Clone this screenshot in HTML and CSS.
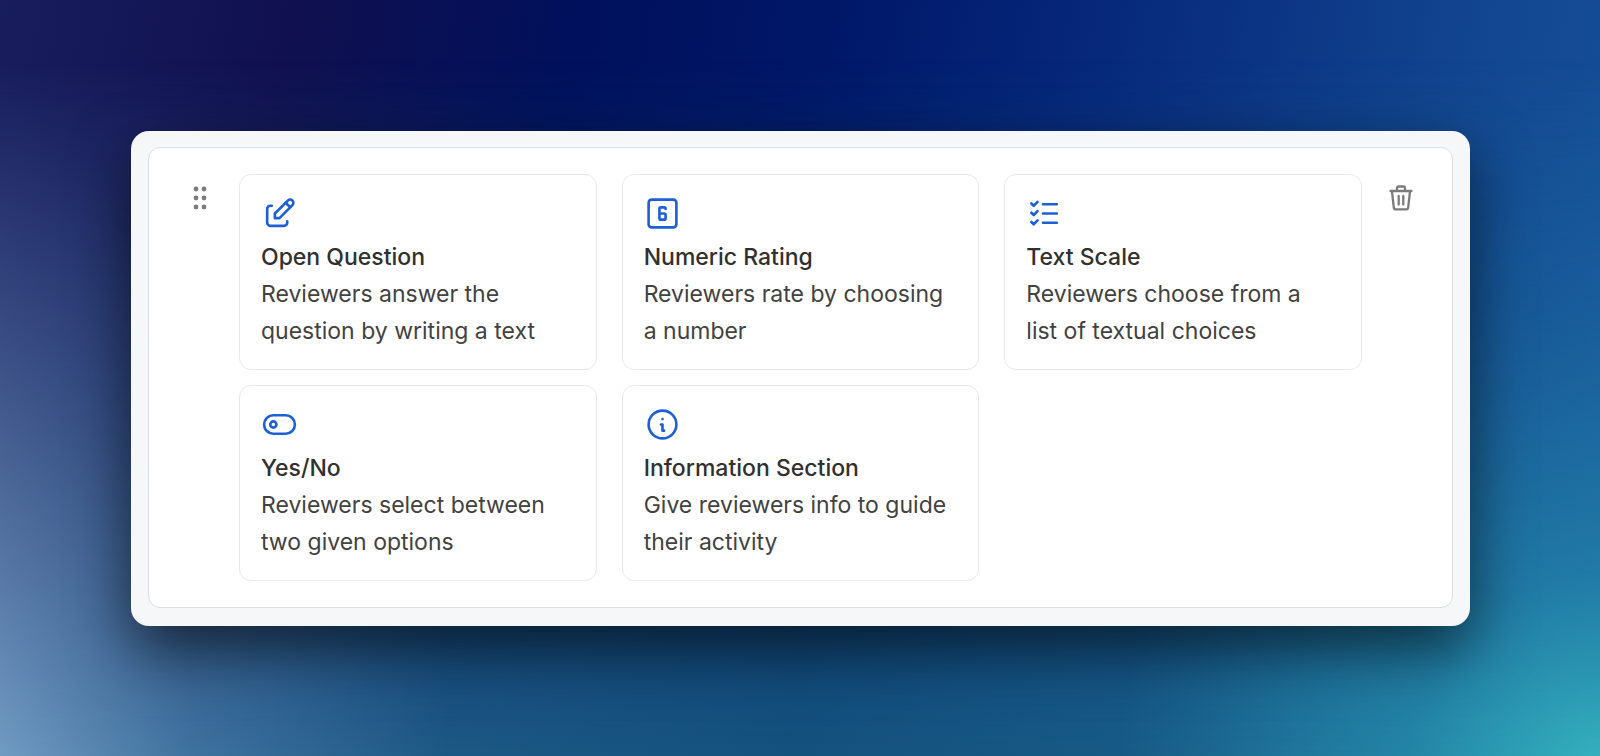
FILE: index.html
```html
<!DOCTYPE html>
<html lang="en">
<head>
    <meta charset="utf-8">
    <title>Question types</title>
    <link rel="stylesheet" href="styles.css">
</head>
<body>
    <main class="frame">
        <div class="panel">
            <button class="icon-button" type="button" aria-label="Move question">
                <svg viewBox="0 0 28 28" fill="currentColor">
                    <circle cx="10" cy="5" r="2.4"/><circle cx="18" cy="5" r="2.4"/>
                    <circle cx="10" cy="14" r="2.4"/><circle cx="18" cy="14" r="2.4"/>
                    <circle cx="10" cy="23" r="2.4"/><circle cx="18" cy="23" r="2.4"/>
                </svg>
            </button>

            <div class="types">
                <button class="type" type="button">
                    <svg class="type-icon" viewBox="0 0 24 24">
                        <path d="M7 7H6a2 2 0 0 0-2 2v9a2 2 0 0 0 2 2h9a2 2 0 0 0 2-2v-1"/>
                        <path d="M20.385 6.585a2.1 2.1 0 0 0-2.97-2.97L9 12v3h3l8.385-8.415z"/>
                        <path d="M16 5l3 3"/>
                    </svg>
                    <span class="type-title">Open Question</span>
                    <span class="type-text">Reviewers answer the question by writing a text</span>
                </button>
                <button class="type" type="button">
                    <svg class="type-icon" viewBox="0 0 24 24">
                        <rect x="3" y="3" width="18" height="18" rx="2"/>
                        <path d="M14 9a1 1 0 0 0-1-1h-2a1 1 0 0 0-1 1v6a1 1 0 0 0 1 1h2a1 1 0 0 0 1-1v-2a1 1 0 0 0-1-1h-3"/>
                    </svg>
                    <span class="type-title">Numeric Rating</span>
                    <span class="type-text">Reviewers rate by choosing a number</span>
                </button>
                <button class="type" type="button">
                    <svg class="type-icon" viewBox="0 0 24 24">
                        <path d="M3.5 5.500L5 7l2.500-2.500"/>
                        <path d="M3.500 11.500L5 13l2.500-2.500"/>
                        <path d="M3.500 17.500L5 19l2.500-2.500"/>
                        <path d="M11 6h9M11 12h9M11 18h9"/>
                    </svg>
                    <span class="type-title">Text Scale</span>
                    <span class="type-text">Reviewers choose from a list of textual choices</span>
                </button>
                <button class="type" type="button">
                    <svg class="type-icon" viewBox="0 0 24 24">
                        <rect x="2" y="6" width="20" height="12" rx="6"/>
                        <circle cx="8" cy="12" r="2"/>
                    </svg>
                    <span class="type-title">Yes/No</span>
                    <span class="type-text">Reviewers select between two given options</span>
                </button>
                <button class="type" type="button">
                    <svg class="type-icon" viewBox="0 0 24 24">
                        <circle cx="12" cy="12" r="9"/>
                        <path d="M12 8.500h.01M11 12h1v4h1"/>
                    </svg>
                    <span class="type-title">Information Section</span>
                    <span class="type-text">Give reviewers info to guide their activity</span>
                </button>
            </div>

            <button class="icon-button" type="button" aria-label="Delete question">
                <svg viewBox="0 0 28 28" fill="none" stroke="currentColor" stroke-width="2.3" stroke-linecap="round" stroke-linejoin="round">
                    <path d="M3.5 7h21"/>
                    <path d="M10 6.500V4a1.500 1.500 0 0 1 1.500-1.500h5A1.500 1.500 0 0 1 18 4v2.500"/>
                    <path d="M5 7.500l1.800 16a2 2 0 0 0 2 1.800h10.400a2 2 0 0 0 2-1.800L23 7.500"/>
                    <path d="M11.700 12v8.500M16.300 12v8.500"/>
                </svg>
            </button>
        </div>
    </main>
</body>
</html>
```
FILE: styles.css
```css
* {
    box-sizing: border-box;
}
body {
    margin: 0;
    min-height: 100vh;
    padding: 40px 130px 40px 131px;
    display: flex;
    align-items: center;
    position: relative;
    font-family: Inter, "Liberation Sans", sans-serif;
    background: linear-gradient(100deg, #181d5e 0%, #10104f 17%, #00105c 34%, #001768 48%, #06277a 63%, #124690 86%, #17539a 100%);
}
/* lighter lower half, faded in from the top */
body::before {
    content: "";
    position: absolute;
    inset: 0;
    background:
        radial-gradient(ellipse 30% 60% at 100% 100%, #34b0bd 0%, rgba(40, 150, 176, 0.6) 40%, rgba(32, 120, 165, 0) 100%),
        linear-gradient(90deg, #709bc2 0%, #3f729f 12%, #1c5885 28%, #14527e 50%, #185c88 75%, #2078a5 100%);
    -webkit-mask-image: linear-gradient(180deg, transparent 8%, rgba(0, 0, 0, 0.4) 45%, #000 100%);
    mask-image: linear-gradient(180deg, transparent 8%, rgba(0, 0, 0, 0.4) 45%, #000 100%);
}
.frame {
    position: relative;
    flex: 1;
    padding: 16px 17px 18px;
    border-radius: 18px;
    background: #f5f7f9;
    box-shadow: 0 24px 60px rgba(0, 0, 0, 0.6);
}
.panel {
    display: flex;
    align-items: flex-start;
    gap: 23px;
    padding: 26px 35px;
    border: 1px solid #dcdee0;
    border-radius: 12px;
    background: #fff;
}
.icon-button {
    flex: none;
    width: 32px;
    margin-top: 10px;
    padding: 0 2px;
    border: none;
    background: none;
    color: #7c7c7c;
    cursor: pointer;
}
.icon-button svg {
    display: block;
    width: 28px;
    height: 28px;
}
.types {
    flex: 1;
    display: grid;
    grid-template-columns: repeat(3, 1fr);
    gap: 15px 25px;
}
.type {
    display: flex;
    flex-direction: column;
    align-items: flex-start;
    padding: 20px 28px 19px 21px;
    border: 1px solid #e6e8ea;
    border-radius: 12px;
    background: #fff;
    color: #424242;
    font: inherit;
    font-size: 23px;
    line-height: 37px;
    text-align: left;
    cursor: pointer;
}
.type:hover {
    border-color: #1f5fd6;
}
.type-icon {
    width: 37px;
    height: 37px;
    margin-bottom: 7px;
    fill: none;
    stroke: #1f5fd6;
    stroke-width: 1.7;
    stroke-linecap: round;
    stroke-linejoin: round;
}
.type-title {
    color: #303030;
    font-weight: 500;
}
```
